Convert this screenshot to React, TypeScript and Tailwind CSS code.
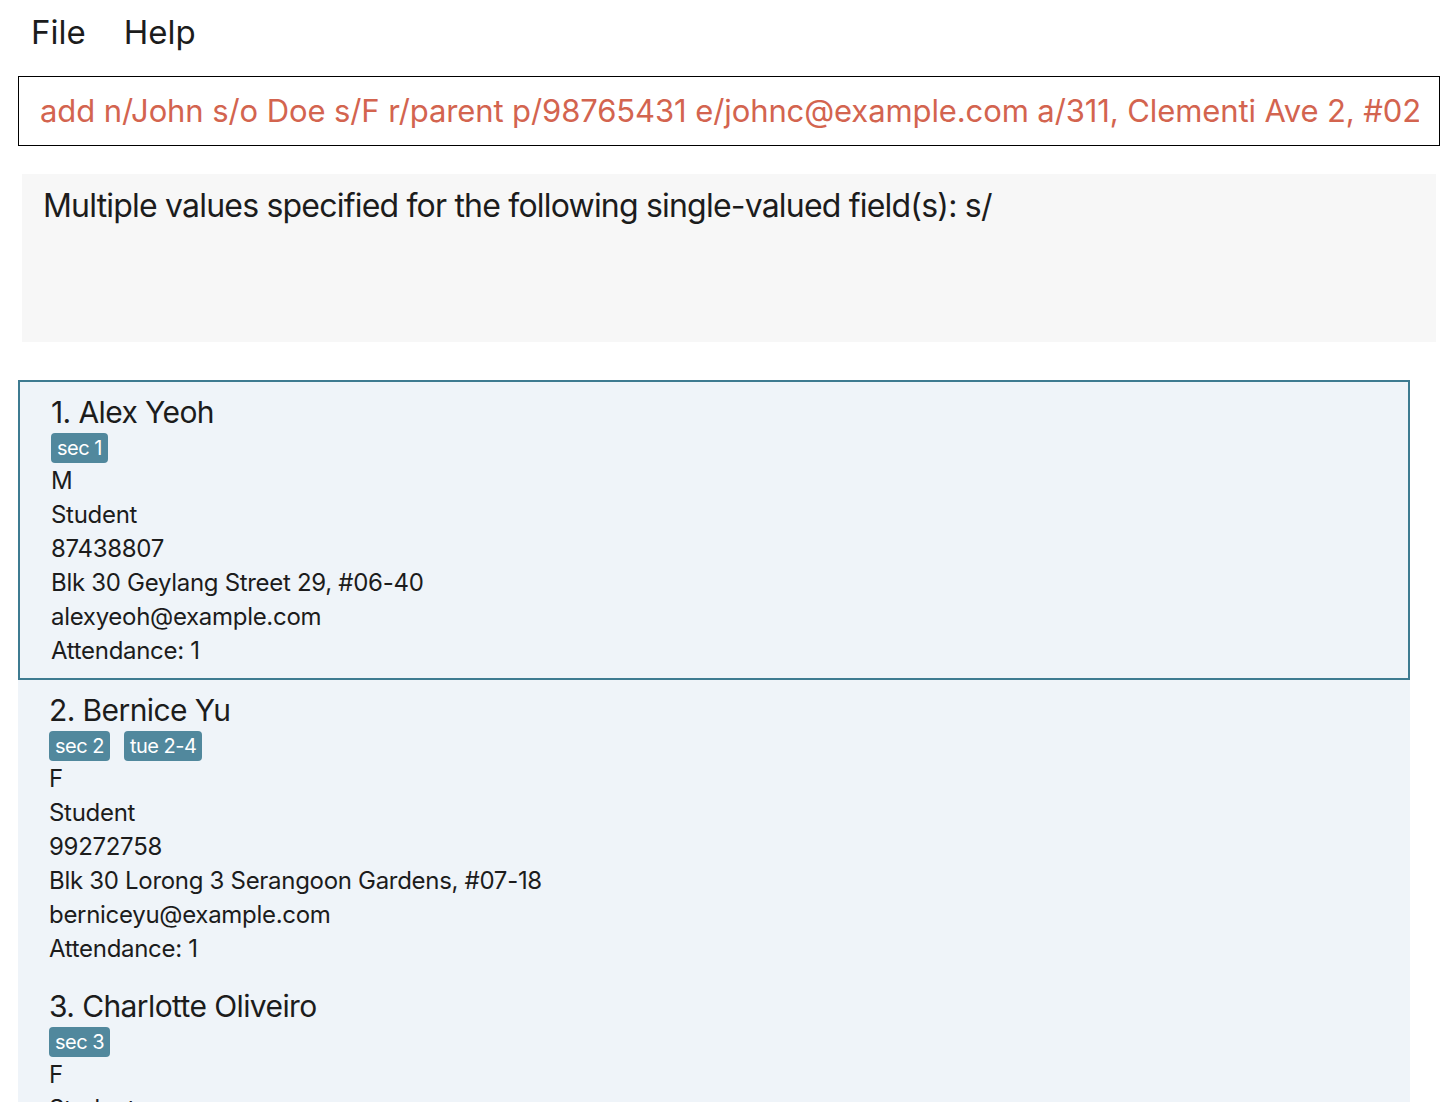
import React from "react";

type Person = {
  name: string;
  tags: string[];
  gender: string;
  role: string;
  phone: string;
  address: string;
  email: string;
  attendance: number;
};

const persons: Person[] = [
  {
    name: "Alex Yeoh",
    tags: ["sec 1"],
    gender: "M",
    role: "Student",
    phone: "87438807",
    address: "Blk 30 Geylang Street 29, #06-40",
    email: "alexyeoh@example.com",
    attendance: 1,
  },
  {
    name: "Bernice Yu",
    tags: ["sec 2", "tue 2-4"],
    gender: "F",
    role: "Student",
    phone: "99272758",
    address: "Blk 30 Lorong 3 Serangoon Gardens, #07-18",
    email: "berniceyu@example.com",
    attendance: 1,
  },
  {
    name: "Charlotte Oliveiro",
    tags: ["sec 3"],
    gender: "F",
    role: "Student",
    phone: "93210283",
    address: "Blk 11 Ang Mo Kio Street 74, #11-04",
    email: "charlotte@example.com",
    attendance: 1,
  },
];

function PersonCard({ person, index, selected }: { person: Person; index: number; selected: boolean }) {
  return (
    <div
      className={
        selected
          ? "border-2 border-[#3e7b91] pl-[31px] pt-[12px] pb-[10px]"
          : "pl-[31px] pt-[12px] pb-[10px]"
      }
    >
      <div className="text-[30px] leading-[36px] tracking-[-0.6px] text-[#1c1c1c]">
        {index + 1}. {person.name}
      </div>
      <div className="mt-[3px] flex gap-[14px]">
        {person.tags.map((t) => (
          <span
            key={t}
            className="h-[30px] rounded-[4px] bg-[#51889d] px-[6px] text-[20px] leading-[30px] tracking-[-0.5px] text-white"
          >
            {t}
          </span>
        ))}
      </div>
      <div className="mt-[1px] text-[24px] leading-[34px] tracking-[-0.3px] text-[#1c1c1c]">
        <div>{person.gender}</div>
        <div>{person.role}</div>
        <div>{person.phone}</div>
        <div>{person.address}</div>
        <div>{person.email}</div>
        <div>Attendance: {person.attendance}</div>
      </div>
    </div>
  );
}

export default function App() {
  return (
    <div className="h-[1102px] w-[1456px] overflow-hidden bg-white font-['Inter',sans-serif] text-[#1c1c1c]">
      <div className="flex h-[66px] items-center gap-[38px] pl-[31px] text-[33px]">
        <span>File</span>
        <span>Help</span>
      </div>

      <div className="ml-[18px] mt-[10px] flex h-[70px] w-[1422px] items-center overflow-hidden border-[1.5px] border-black pl-[21px] pr-[20px]">
        <div className="overflow-hidden whitespace-nowrap text-[31px] tracking-[-0.1px] text-[#d3644f]">
          add n/John s/o Doe s/F r/parent p/98765431 e/johnc@example.com a/311, Clementi Ave 2, #02-25
        </div>
      </div>

      <div className="ml-[22px] mt-[28px] h-[168px] w-[1414px] bg-[#f7f7f7] px-[21px] pt-[12px] text-[32px] leading-[40px] tracking-[-0.8px]">
        Multiple values specified for the following single-valued field(s): s/
      </div>

      <div className="ml-[18px] mt-[38px] h-[722px] w-[1392px] overflow-hidden bg-[#eff4f9]">
        {persons.map((p, i) => (
          <PersonCard key={p.name} person={p} index={i} selected={i === 0} />
        ))}
      </div>
    </div>
  );
}
